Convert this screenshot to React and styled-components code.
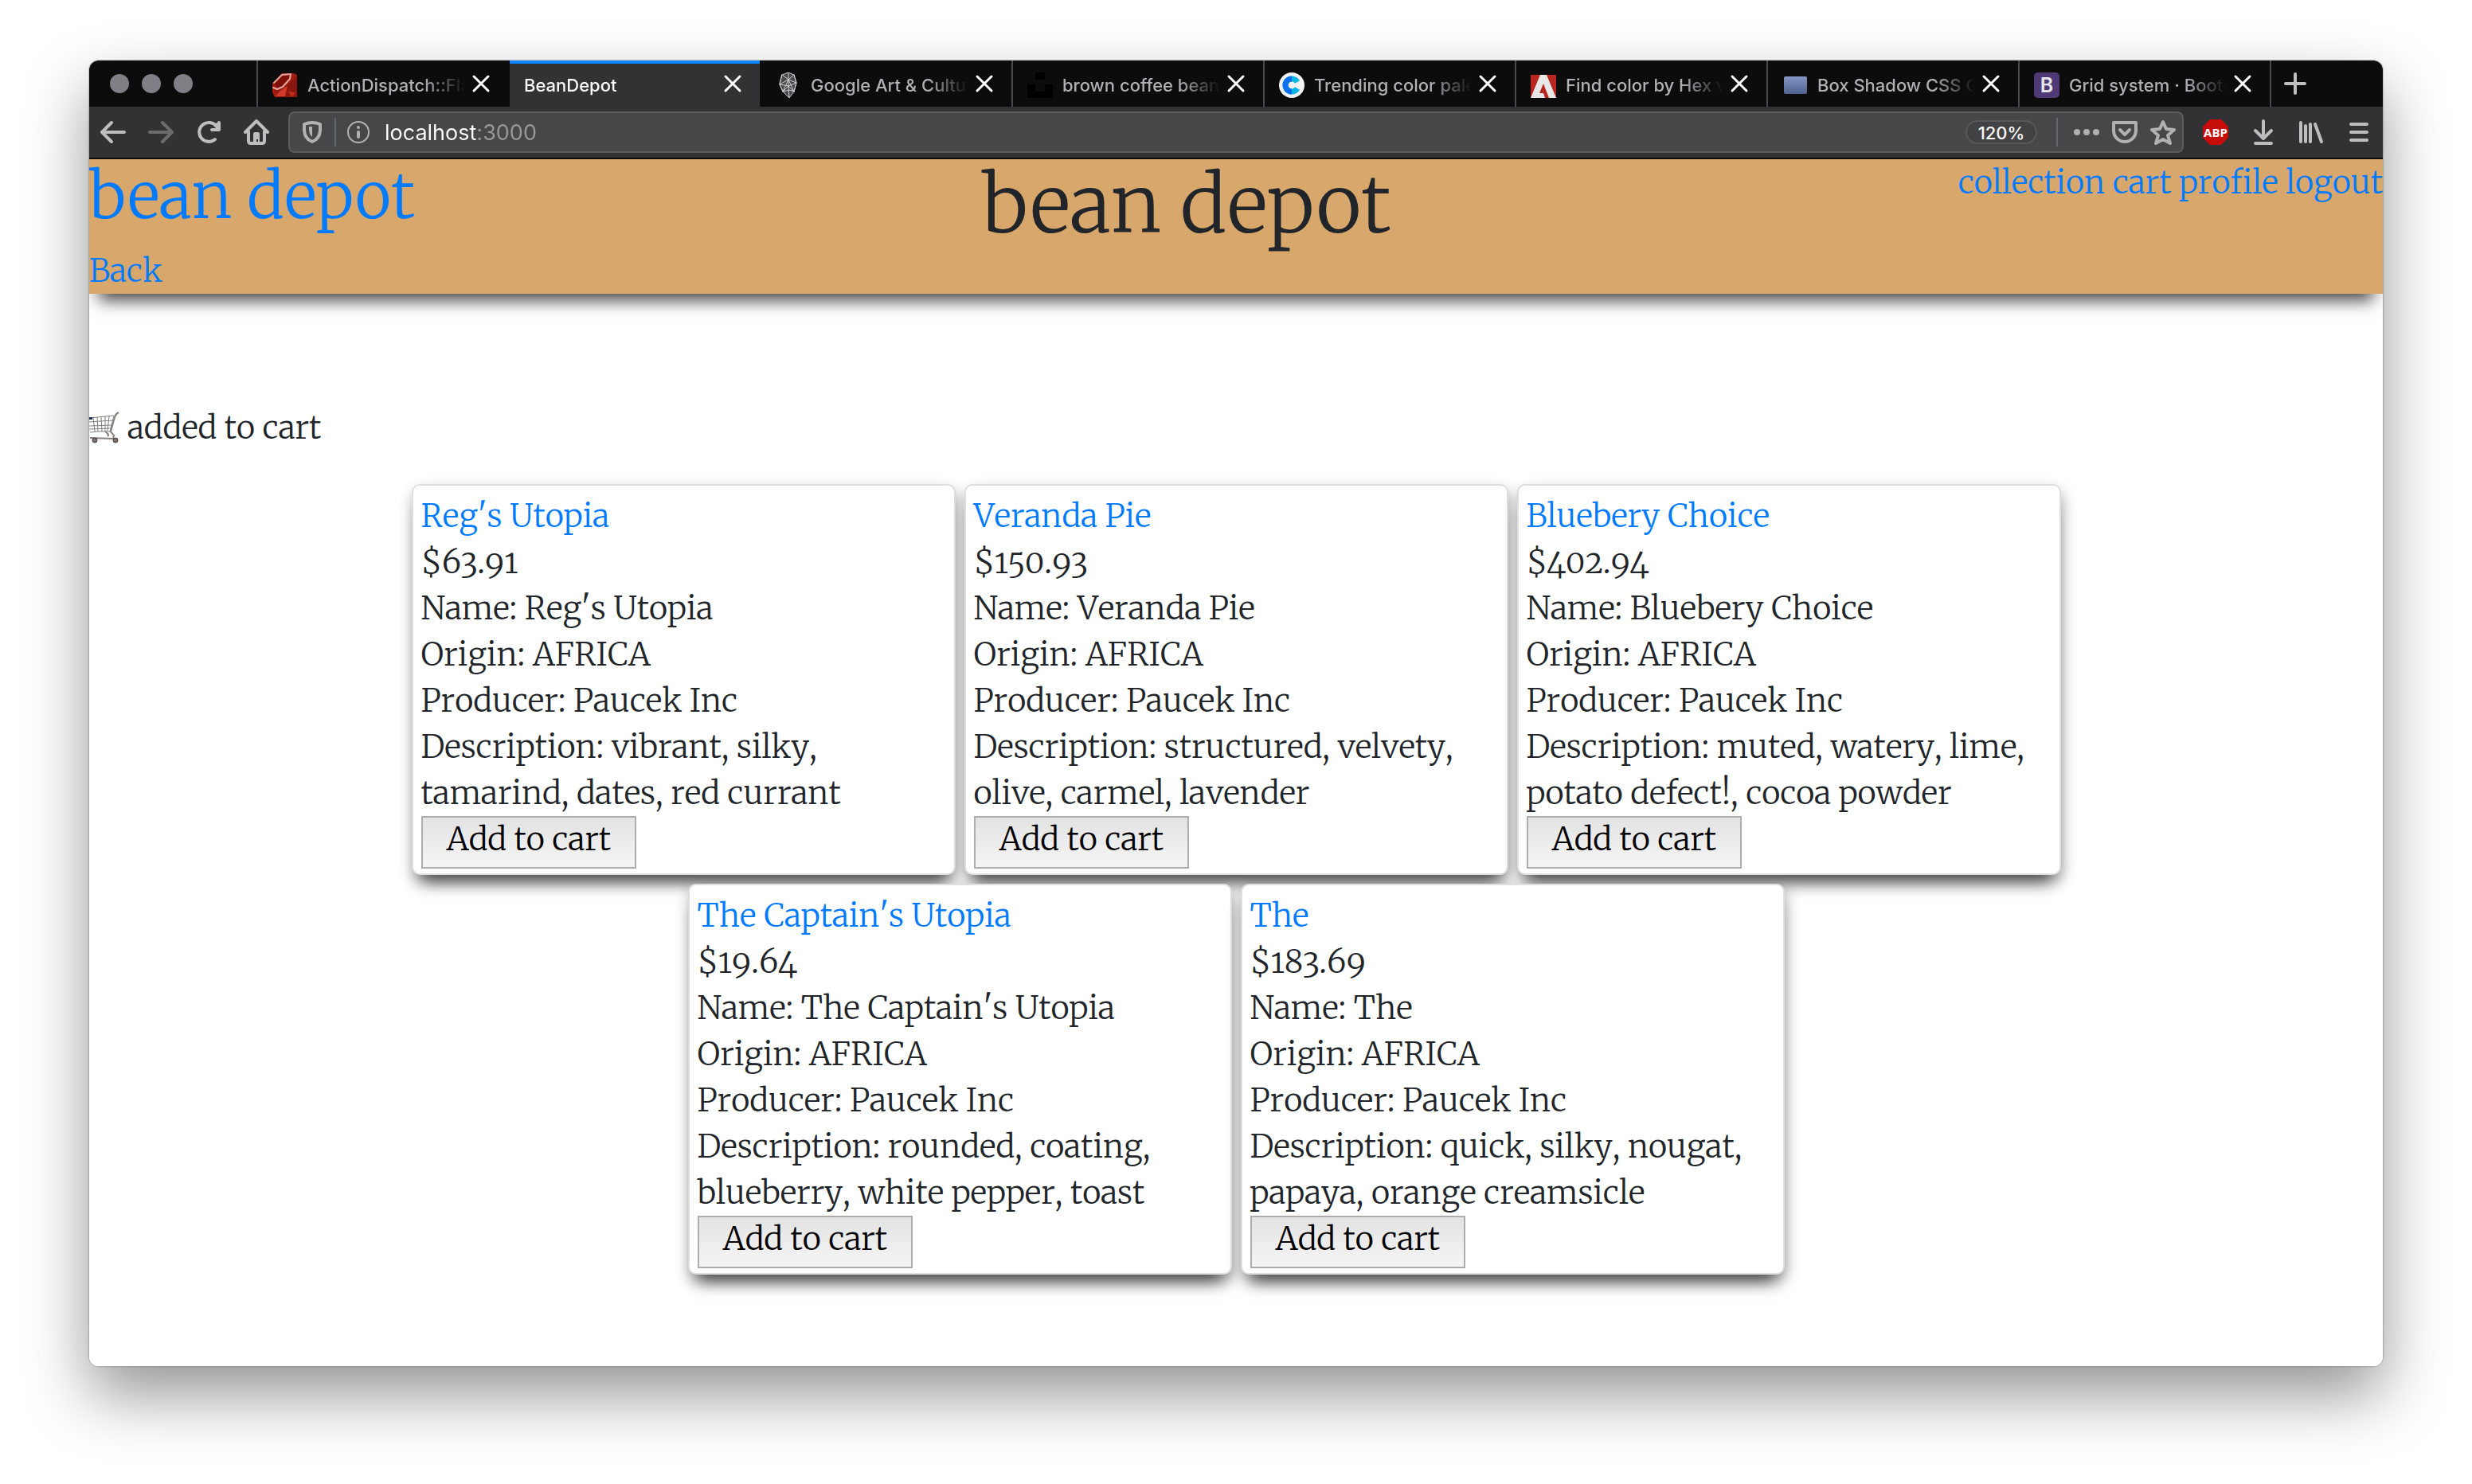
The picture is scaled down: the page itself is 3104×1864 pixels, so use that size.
import React from "react";
import styled, { createGlobalStyle, css } from "styled-components";

const serif = `Merriweather, "DejaVu Serif Condensed", "DejaVu Serif", serif`;
const sans = `Inter, Roboto, "Liberation Sans", sans-serif`;

const GlobalStyle = createGlobalStyle`
  * { box-sizing: border-box; }
  body { margin: 0; background: #fff; }
  button, input { font: inherit; }
`;

const Desktop = styled.div`
  display: flex;
  min-height: 100vh;
  padding: 76px 112px 148px;
`;

const BrowserWindow = styled.div`
  flex: 1;
  display: flex;
  flex-direction: column;
  min-width: 0;
  overflow: hidden;
  border-radius: 12px;
  background: #fff;
`;

const WindowFrame = styled.div`
  flex: 1;
  display: flex;
  min-width: 0;
  border-radius: 12px;
  box-shadow: 0 0 2px rgba(0, 0, 0, 0.6), 0 36px 80px rgba(0, 0, 0, 0.42);
`;

/* ---------- browser chrome ---------- */

const Chrome = styled.div`
  font-family: ${sans};
  font-size: 22px;
  color: #b1b1b3;
`;

const TabStrip = styled.div`
  display: flex;
  height: 58px;
  background: #0c0c0d;
`;

const WindowControls = styled.div`
  flex: none;
  display: flex;
  align-items: center;
  gap: 16px;
  width: 212px;
  padding-left: 26px;
  border-right: 2px solid #4a4a4c;
`;

const Light = styled.button`
  width: 24px;
  height: 24px;
  padding: 0;
  border: 0;
  border-radius: 50%;
  background: #807f85;
`;

const Tab = styled.div`
  flex: 0 1 316px;
  display: flex;
  align-items: center;
  min-width: 0;
  padding: 0 14px 0 18px;
  border-right: 2px solid ${(p) => (p.$plain ? "transparent" : "#4a4a4c")};
  ${(p) =>
    p.$active &&
    css`
      border-right-color: transparent;
      background: #323234 padding-box;
      color: #f9f9fa;
      box-shadow: inset 0 4px #0a84ff;
    `}
`;

const TabLabel = styled.button`
  flex: 1;
  display: flex;
  align-items: center;
  gap: 12px;
  min-width: 0;
  height: 100%;
  padding: 4px 0 0;
  border: 0;
  background: none;
  color: inherit;
  text-align: left;
`;

const TabTitle = styled.span`
  flex: 1;
  overflow: hidden;
  white-space: nowrap;
  font-weight: 500;
  line-height: 32px;
  mask-image: linear-gradient(to right, #000 calc(100% - 52px), transparent);
`;

const IconButton = styled.button`
  flex: none;
  display: flex;
  align-items: center;
  justify-content: center;
  width: ${(p) => p.$width || 60}px;
  padding: 0;
  border: 0;
  background: none;
  color: ${(p) => p.$color || "#bebebf"};
`;

const Glyph = styled.svg.attrs({ viewBox: "0 0 32 32", "aria-hidden": true })`
  flex: none;
  display: block;
  width: 32px;
  height: 32px;
  fill: none;
  stroke: currentColor;
  stroke-width: 4;
  stroke-linecap: round;
  stroke-linejoin: round;
`;

const Toolbar = styled.div`
  display: flex;
  align-items: stretch;
  height: 66px;
  border-bottom: 2px solid #0c0c0d;
  background: #323234;
`;

const UrlBar = styled.form`
  flex: 1;
  display: flex;
  align-items: center;
  min-width: 0;
  margin: 6px 10px;
  border: 2px solid #5c5c5e;
  border-radius: 8px;
  background: #474749;
`;

const Divider = styled.span`
  flex: none;
  width: 2px;
  height: 36px;
  margin-right: ${(p) => p.$after || 0}px;
  background: #5f6670;
`;

const UrlInput = styled.input`
  flex: 1;
  min-width: 0;
  padding: 2px 5px 0;
  border: 0;
  outline: 0;
  color: #f9f9fa;
  font-size: 27px;
  line-height: 40px;
  background: linear-gradient(to right, #fff 120px, #98989a 120px);
  background-clip: text;
  -webkit-text-fill-color: transparent;
`;

const ZoomLevel = styled.button`
  flex: none;
  width: 90px;
  height: 30px;
  margin-right: 24px;
  padding: 0;
  border: 2px solid #58585a;
  border-radius: 15px;
  background: #424244;
  color: #f9f9fa;
  font-weight: 500;
  line-height: 28px;
`;

/* ---------- shop page ---------- */

const Page = styled.div`
  flex: 1;
  background: #fff;
  color: #212529;
  font-family: ${serif};
  font-size: 40px;
  font-weight: 300;
  font-kerning: none;
  line-height: 58px;
`;

const Link = styled.a`
  color: #007bff;
  text-decoration: none;
`;

const SiteHeader = styled.header`
  display: flex;
  justify-content: space-between;
  align-items: flex-start;
  background: #d8a76c;
  box-shadow: 0 20px 20px -12px rgba(0, 0, 0, 0.75);
`;

const Brand = styled.h2`
  margin: 0 0 19px;
  font-size: 78px;
  font-weight: 300;
  font-kerning: normal;
  line-height: 92px;
`;

const PageTitle = styled.h1`
  margin: 0;
  font-size: 98px;
  font-weight: 300;
  font-kerning: normal;
  line-height: 115px;
`;

const Content = styled.main`
  display: flex;
  flex-direction: column;
  gap: 42px;
  padding: 139px 0 115px;
`;

const Notice = styled.p`
  display: flex;
  align-items: center;
  gap: 10px;
  margin: 0;
`;

const CartDrawing = styled.svg`
  width: 38px;
  height: 40px;
  fill: none;
  stroke: #85807d;
`;

const ProductList = styled.div`
  display: flex;
  flex-wrap: wrap;
  justify-content: center;
  gap: 11px;
  width: 100%;
  max-width: 2160px;
  margin: 0 auto;
`;

const Card = styled.article`
  width: 683px;
  padding: 9px 10px 6px;
  border: 2px solid #dfdfdf;
  border-radius: 10px;
  background: #fff;
  box-shadow: 0 20px 20px -12px rgba(0, 0, 0, 0.65), 2px 8px 18px rgba(0, 0, 0, 0.3);
`;

const Line = styled.p`
  margin: 0;
`;

const AddButton = styled.button`
  display: block;
  padding: 0 30px 8px;
  border: 2px solid #adadad;
  background: linear-gradient(#e3e3e3, #f5f5f5);
  color: #000;
  line-height: 54px;
`;

/* ---------- favicons ---------- */

const RubyIcon = () => (
  <Glyph>
    <path d="M12 1h15l4 2v28H3l-3-6V14z" fill="#9c1c12" stroke="none" />
    <path d="M2 14 12 3l11-1-5 12-11 7z" fill="#7c1009" stroke="none" />
    <path d="M20 14l11-9v26H10z" fill="#8a170f" stroke="none" />
    <path d="M9 24l10-7-3 13H4z" fill="#d03a2b" stroke="none" />
    <path d="M20 23l9 3-5 5z" fill="#c22a1d" stroke="none" />
    <path d="M1 19l5 2 7-3 9-10 1-6M2 13 12 3l11-1" stroke="#e3a59c" strokeWidth="2" />
  </Glyph>
);

const ArtsIcon = () => (
  <Glyph>
    <path d="M8 3l8-3 7 3 3 10-3 11-6 8-8-8-4-9z" fill="#4a4a4c" stroke="#d0d0d2" strokeWidth="1" />
    <path d="M8 3l8 6 7-6M16 0v9M16 9L5 15l11 2 10-4-10-4v8L9 24l-4-9 3-12M16 17l7 7 3-11-3-10M16 17l1 15M9 24l8-2 6 2M16 9L9 24M16 9l7 15" stroke="#d0d0d2" strokeWidth="1" />
  </Glyph>
);

const UnsplashIcon = () => (
  <Glyph>
    <path d="M10 0h12v9H10zM0 15h10v9h12v-9h10v17H0z" fill="#000" stroke="none" />
  </Glyph>
);

const CoolorsIcon = () => (
  <Glyph>
    <circle cx="16" cy="16" r="16" fill="#f2f2f2" stroke="none" />
    <path d="M23 20a8 8 0 1 1 0-8" stroke="#00b4e6" strokeWidth="7" strokeLinecap="butt" />
    <path d="M16 24a8 8 0 0 1 0-16" stroke="#0a6ff0" strokeWidth="7" strokeLinecap="butt" />
  </Glyph>
);

const AdobeIcon = () => (
  <Glyph>
    <path d="M0 3h32v29H0z" fill="#e8e8e8" stroke="none" />
    <path d="M0 3h12L0 32zM20 3h12v29zM16 14l7 18h-5l-2-6h-5z" fill="#b9251f" stroke="none" />
  </Glyph>
);

const BoxIcon = () => (
  <Glyph>
    <defs>
      <linearGradient id="box-fill" x1="0" y1="0" x2="0" y2="1">
        <stop offset="0" stopColor="#8496c4" />
        <stop offset="1" stopColor="#50628f" />
      </linearGradient>
    </defs>
    <rect x="2" y="5" width="29" height="22" rx="2" fill="url(#box-fill)" stroke="none" />
  </Glyph>
);

const Letter = styled.span`
  flex: none;
  display: flex;
  align-items: center;
  justify-content: center;
  width: 32px;
  height: 32px;
  border-radius: 5px;
  background: #4f3a75;
  color: #e8e6ec;
  font-size: 25px;
  font-weight: 600;
`;

/* ---------- toolbar drawings ---------- */

const CloseIcon = () => (
  <Glyph>
    <path d="M7 7l18 18M25 7L7 25" stroke="#fff" strokeWidth="3" />
  </Glyph>
);
const PlusIcon = () => (
  <Glyph>
    <path d="M16 4v24M4 16h24" />
  </Glyph>
);
const BackIcon = () => (
  <Glyph>
    <path d="M30 16H3M14 4L2 16l12 12" />
  </Glyph>
);
const ForwardIcon = () => (
  <Glyph>
    <path d="M2 16h27M18 4l12 12-12 12" />
  </Glyph>
);
const ReloadIcon = () => (
  <Glyph>
    <path d="M24 25A12 12 0 1 1 26 9" />
    <path d="M29 4v9h-9M27 6v5" />
  </Glyph>
);
const HomeIcon = () => (
  <Glyph>
    <path d="M2 16L16 2l14 14M6 15v12q0 3 3 3h14q3 0 3-3V15" />
    <path d="M12 29V18q0-2 2-2h4q2 0 2 2v11h-2v-4h-2v4z" fill="currentColor" stroke="none" />
  </Glyph>
);
const ShieldIcon = () => (
  <Glyph>
    <path d="M6 6q10-4 20 0v7q0 11-10 15Q6 24 6 13z" />
    <path d="M16 9v13q-4-3-4-10V9z" fill="currentColor" stroke="none" />
  </Glyph>
);
const InfoIcon = () => (
  <Glyph>
    <circle cx="16" cy="16" r="13" strokeWidth="2" />
    <path d="M16 16v6M16 10v0" />
  </Glyph>
);
const DotsIcon = () => (
  <Glyph fill="currentColor">
    <path
      d="M0 16a4 4 0 1 1 8 0a4 4 0 1 1-8 0M12 16a4 4 0 1 1 8 0a4 4 0 1 1-8 0M24 16a4 4 0 1 1 8 0a4 4 0 1 1-8 0"
      fill="currentColor"
      stroke="none"
    />
  </Glyph>
);
const PocketIcon = () => (
  <Glyph>
    <path d="M2 4h28v10a14 14 0 0 1-28 0z" />
    <path d="M10 13l6 6 6-6" />
  </Glyph>
);
const StarIcon = () => (
  <Glyph>
    <path d="M16 3l4 9 10 1-8 7 3 10-9-5-9 5 3-10-8-7 10-1z" />
  </Glyph>
);
const DownloadIcon = () => (
  <Glyph>
    <path d="M16 2v22M6 14l10 10 10-10M6 30h20" />
  </Glyph>
);
const LibraryIcon = () => (
  <Glyph>
    <path d="M3 4v24M9 8v20M15 6v22M21 6l8 22" />
  </Glyph>
);
const MenuIcon = () => (
  <Glyph>
    <path d="M6 6h20M6 16h20M6 26h20" />
  </Glyph>
);
const AbpIcon = () => (
  <Glyph>
    <path d="M9 0h14l9 9v14l-9 9H9l-9-9V9z" fill="#c70d0a" stroke="none" />
    <text x="16" y="22" textAnchor="middle" fill="#fff" stroke="none" fontFamily="Open Sans, sans-serif" fontWeight="700" fontSize="15">
      ABP
    </text>
  </Glyph>
);

const CartIcon = () => (
  <CartDrawing viewBox="0 0 38 40" aria-hidden="true">
    <path d="M0 8l31-3-5 20q-12-1-25 1M0 13l30-2M0 18l28-1M0 22l27-1M5 8l2 17M10 7l1 18M15 7l1 18M20 6v18M25 6l-2 18" strokeWidth="1" />
    <path d="M37 1q-4 2-5 6l-5 18 4 5-1 4-29-1M20 25q6 4 3 6" strokeWidth="2" />
    <path d="M0 7h4v3H0z" fill="#23384a" stroke="none" />
    <circle cx="7" cy="36" r="3" fill="#7b6d68" stroke="#4a4442" />
    <circle cx="33" cy="36" r="3" fill="#7b6d68" stroke="#4a4442" />
  </CartDrawing>
);

const tabs = [
  { title: "ActionDispatch::Fla", icon: <RubyIcon />, plain: true },
  { title: "BeanDepot", active: true },
  { title: "Google Art & Cultu", icon: <ArtsIcon /> },
  { title: "brown coffee bean", icon: <UnsplashIcon /> },
  { title: "Trending color pale", icon: <CoolorsIcon /> },
  { title: "Find color by Hex v", icon: <AdobeIcon /> },
  { title: "Box Shadow CSS G", icon: <BoxIcon /> },
  { title: "Grid system · Boots", icon: <Letter aria-hidden="true">B</Letter> },
];

const products = [
  { name: "Reg's Utopia", price: "$63.91", notes: "vibrant, silky, tamarind, dates, red currant" },
  { name: "Veranda Pie", price: "$150.93", notes: "structured, velvety, olive, carmel, lavender" },
  { name: "Bluebery Choice", price: "$402.94", notes: "muted, watery, lime, potato defect!, cocoa powder" },
  { name: "The Captain's Utopia", price: "$19.64", notes: "rounded, coating, blueberry, white pepper, toast" },
  { name: "The", price: "$183.69", notes: "quick, silky, nougat, papaya, orange creamsicle" },
];

const Price = styled(Line)`
  font-variant-numeric: oldstyle-nums;
`;

function BrowserChrome() {
  return (
    <Chrome>
      <TabStrip>
        <WindowControls>
          <Light aria-label="Close window" />
          <Light aria-label="Minimize window" />
          <Light aria-label="Zoom window" />
        </WindowControls>
        {tabs.map((tab) => (
          <Tab key={tab.title} $active={tab.active} $plain={tab.plain}>
            <TabLabel>
              {tab.icon}
              <TabTitle>{tab.title}</TabTitle>
            </TabLabel>
            <IconButton $width={40} aria-label="Close tab">
              <CloseIcon />
            </IconButton>
          </Tab>
        ))}
        <IconButton aria-label="New tab">
          <PlusIcon />
        </IconButton>
      </TabStrip>
      <Toolbar>
        <IconButton aria-label="Back"><BackIcon /></IconButton>
        <IconButton aria-label="Forward" $color="#6c6c6e"><ForwardIcon /></IconButton>
        <IconButton aria-label="Reload"><ReloadIcon /></IconButton>
        <IconButton aria-label="Home"><HomeIcon /></IconButton>
        <UrlBar onSubmit={(e) => e.preventDefault()}>
          <IconButton type="button" $width={56} $color="#b1b1b3" aria-label="Tracking protection"><ShieldIcon /></IconButton>
          <Divider />
          <IconButton type="button" $width={56} $color="#b1b1b3" aria-label="Site information"><InfoIcon /></IconButton>
          <UrlInput aria-label="Address" defaultValue="localhost:3000" />
          <ZoomLevel type="button">120%</ZoomLevel>
          <Divider $after={12} />
          <IconButton type="button" $width={48} $color="#b1b1b3" aria-label="Page actions"><DotsIcon /></IconButton>
          <IconButton type="button" $width={48} $color="#b1b1b3" aria-label="Save to Pocket"><PocketIcon /></IconButton>
          <IconButton type="button" $width={48} $color="#b1b1b3" aria-label="Bookmark"><StarIcon /></IconButton>
        </UrlBar>
        <IconButton aria-label="Adblock Plus"><AbpIcon /></IconButton>
        <IconButton aria-label="Downloads"><DownloadIcon /></IconButton>
        <IconButton aria-label="Library"><LibraryIcon /></IconButton>
        <IconButton aria-label="Menu"><MenuIcon /></IconButton>
      </Toolbar>
    </Chrome>
  );
}

function ProductCard({ name, price, notes }) {
  return (
    <Card>
      <Line><Link href="#">{name}</Link></Line>
      <Price>{price}</Price>
      <Line>{`Name: ${name}`}</Line>
      <Line>Origin: AFRICA</Line>
      <Line>Producer: Paucek Inc</Line>
      <Line>{`Description: ${notes}`}</Line>
      <AddButton>Add to cart</AddButton>
    </Card>
  );
}

export default function App() {
  return (
    <Desktop>
      <GlobalStyle />
      <WindowFrame>
        <BrowserWindow>
          <BrowserChrome />
          <Page>
            <SiteHeader>
              <div>
                <Brand><Link href="#">bean depot</Link></Brand>
                <Link href="#">Back</Link>
              </div>
              <PageTitle>bean depot</PageTitle>
              <nav>
                <Link href="#">collection</Link> <Link href="#">cart</Link>{" "}
                <Link href="#">profile</Link> <Link href="#">logout</Link>
              </nav>
            </SiteHeader>
            <Content>
              <Notice><CartIcon />added to cart</Notice>
              <ProductList>
                {products.map((p) => (
                  <ProductCard key={p.name} {...p} />
                ))}
              </ProductList>
            </Content>
          </Page>
        </BrowserWindow>
      </WindowFrame>
    </Desktop>
  );
}
